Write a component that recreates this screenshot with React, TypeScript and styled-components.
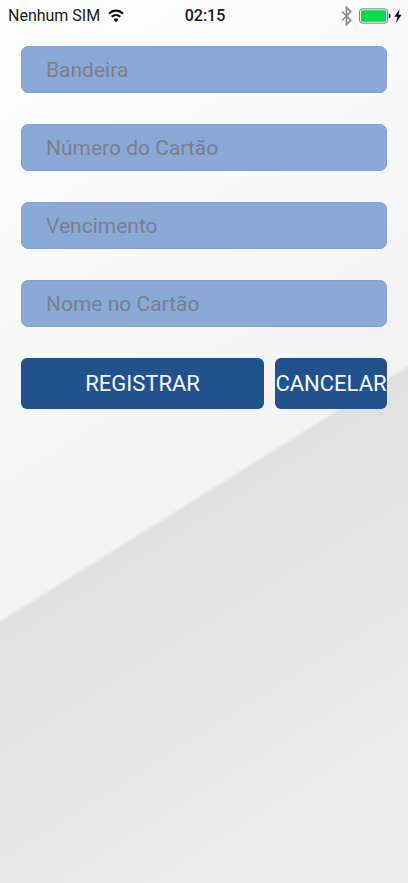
import React from 'react';
import styled, { createGlobalStyle } from 'styled-components';

const GlobalStyle = createGlobalStyle`
  * { box-sizing: border-box; }
  body { margin: 0; font-family: Roboto, "Liberation Sans", sans-serif; }
`;

const Screen = styled.div`
  min-height: 100vh;
  display: flex;
  flex-direction: column;
  background: linear-gradient(148deg, #fefefe 0%, #fafafa 25%, #f3f3f3 54.4%, #e0e0e0 54.8%, #e7e7e7 75%, #efefef 100%);
`;

const StatusBar = styled.header`
  display: grid;
  grid-template-columns: 1fr auto 1fr;
  align-items: center;
  height: 32px;
  padding: 0 6px 0 8px;
  color: #1a1a1a;
  font-size: 16px;
  line-height: 20px;
  white-space: nowrap;
`;

const StatusGroup = styled.div<{ $end?: boolean }>`
  display: flex;
  align-items: center;
  justify-content: ${({ $end }) => ($end ? 'flex-end' : 'flex-start')};
  gap: ${({ $end }) => ($end ? '3px' : '8px')};
  svg { display: block; flex: none; }
`;

const Clock = styled.time`
  font-weight: 500;
`;

const Form = styled.form`
  display: flex;
  flex-direction: column;
  gap: 31px;
  padding: 14px 21px;
`;

const Field = styled.input`
  width: 100%;
  height: 47px;
  padding: 0 24px;
  border: 1px solid #86a2d0;
  border-radius: 7px;
  background: #8ba9d6;
  color: #333;
  font: 400 21px/28px Roboto, "Liberation Sans", sans-serif;
  &::placeholder { color: #7b808b; opacity: 1; }
`;

const Actions = styled.div`
  display: flex;
  gap: 11px;
`;

const Button = styled.button<{ $grow?: boolean }>`
  flex: ${({ $grow }) => ($grow ? '1 1 0' : '0 0 112px')};
  height: 51px;
  padding: 0;
  border: 0;
  border-radius: 6px;
  background: #22528d;
  color: #f4f8fd;
  font: 400 22px/28px Roboto, "Liberation Sans", sans-serif;
  white-space: nowrap;
`;

const WifiIcon = () => (
  <svg width="16" height="14" viewBox="0 0 16 14" fill="none" aria-hidden="true">
    <path d="M1 4.8C5 .6 11 .6 15 4.8" stroke="#111" strokeWidth="2.1" />
    <path d="M3.7 7.8C6.2 5.3 9.8 5.3 12.3 7.8" stroke="#111" strokeWidth="2" />
    <path d="M5.6 10.4C7 9 9 9 10.4 10.4L8 13.2Z" fill="#111" />
  </svg>
);

const BluetoothIcon = () => (
  <svg width="15" height="20" viewBox="0 0 15 20" fill="none" aria-hidden="true">
    <path d="M1 5.5L9.7 14.2L5.5 18.7V1.3L9.7 5.8L1 14.5" stroke="#8f8f8f" strokeWidth="1.7" />
  </svg>
);

const BatteryIcon = () => (
  <svg width="32" height="16" viewBox="0 0 32 16" aria-hidden="true">
    <rect x=".6" y=".9" width="28" height="14.2" rx="2.5" fill="#fff" stroke="#777" />
    <rect x="2" y="2.3" width="25.2" height="11.4" rx="1.2" fill="#05dc4b" />
    <path d="M29.8 5.4C32.2 5.4 32.2 10.6 29.8 10.6Z" fill="#222" />
  </svg>
);

const BoltIcon = () => (
  <svg width="8" height="14" viewBox="0 0 8 14" aria-hidden="true">
    <path d="M5.6 0L.4 7.8H3.4L2 14L7.6 5.8H4.6Z" fill="#111" />
  </svg>
);

const fields = [
  { name: 'bandeira', label: 'Bandeira' },
  { name: 'numero', label: 'Número do Cartão' },
  { name: 'vencimento', label: 'Vencimento' },
  { name: 'nome', label: 'Nome no Cartão' },
];

export default function App() {
  return (
    <Screen>
      <GlobalStyle />
      <StatusBar>
        <StatusGroup>
          <span>Nenhum SIM</span>
          <WifiIcon />
        </StatusGroup>
        <Clock>02:15</Clock>
        <StatusGroup $end>
          <BluetoothIcon />
          <BatteryIcon />
          <BoltIcon />
        </StatusGroup>
      </StatusBar>
      <Form onSubmit={(event) => event.preventDefault()}>
        {fields.map(({ name, label }) => (
          <Field key={name} name={name} type="text" placeholder={label} aria-label={label} />
        ))}
        <Actions>
          <Button type="submit" $grow>REGISTRAR</Button>
          <Button type="button">CANCELAR</Button>
        </Actions>
      </Form>
    </Screen>
  );
}
